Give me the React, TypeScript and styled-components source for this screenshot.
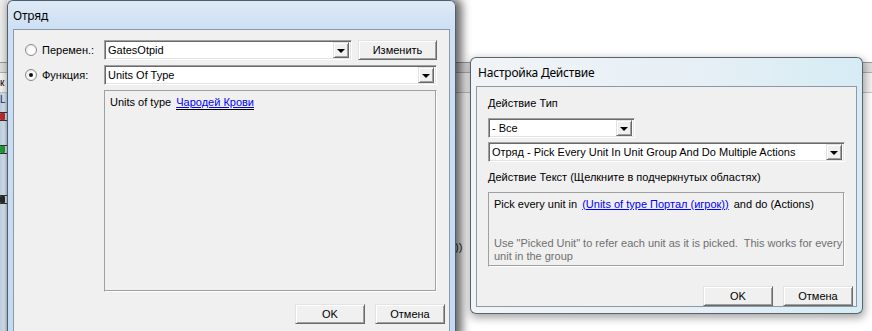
import React from "react";
import styled, { createGlobalStyle } from "styled-components";

const GlobalStyle = createGlobalStyle`
  html, body {
    margin: 0;
    padding: 0;
    background: #fff;
  }
  body {
    font-family: "Liberation Sans", Arial, sans-serif;
    font-size: 11px;
    color: #000;
    overflow: hidden;
  }
`;

const Desktop = styled.div`
  position: relative;
  width: 872px;
  height: 331px;
  overflow: hidden;
  background: #fff;
`;

// the editor window that sits behind both dialogs
const BackWindow = styled.div`
  display: grid;
  grid-template-columns: 7px 1fr;
  grid-template-rows: 62px 11px 20px 1fr;
  height: 100%;
`;

const SideTop = styled.div`
  background: #ececec;
`;

const MainTop = styled.div`
  background: #fff;
`;

const Toolbar = styled.div`
  grid-column: 1 / 3;
  background: #dedede;
  border-top: 1px solid #9a9a9a;
  border-bottom: 1px solid #b0b0b0;
`;

const TabRow = styled.div`
  grid-column: 1 / 3;
  display: flex;
  align-items: center;
  background: #f2f2f2;
  border-bottom: 1px solid #c4c4c4;
  overflow: hidden;
`;

const SideGlyph = styled.span<{ $color?: string }>`
  font-size: 10px;
  line-height: 12px;
  color: ${(p) => p.$color || "#000"};
`;

const SidePane = styled.div`
  display: flex;
  flex-direction: column;
  align-items: flex-start;
  padding-top: 1px;
  overflow: hidden;
  background: linear-gradient(to right, #b9cde0, #dfe9f3 60%, #c6d6e6);
`;

const SideSlot = styled.div<{ $top: number }>`
  margin-top: ${(p) => p.$top}px;
  display: flex;
`;

const MainBody = styled.div`
  background: #fff;
  padding: 148px 0 0 448px;
  font-size: 11px;
  color: #222;
`;

const Dialog = styled.div<{
  $x: number;
  $y: number;
  $w: number;
  $h: number;
  $tint: string;
  $shadow: string;
}>`
  position: absolute;
  left: ${(p) => p.$x}px;
  top: ${(p) => p.$y}px;
  width: ${(p) => p.$w}px;
  height: ${(p) => p.$h}px;
  box-sizing: border-box;
  display: flex;
  flex-direction: column;
  padding: 0 5px 6px;
  border: 1px solid rgba(35, 45, 60, 0.72);
  border-radius: 6px;
  background: ${(p) => p.$tint};
  box-shadow: ${(p) => p.$shadow};
`;

const TitleBar = styled.div<{ $indent: number }>`
  height: 28px;
  display: flex;
  align-items: center;
  padding-left: ${(p) => p.$indent}px;
  font-family: "Noto Sans", "Open Sans", sans-serif;
  font-size: 12px;
  letter-spacing: -0.2px;
  color: #000;
`;

const Client = styled.div`
  flex: 1;
  display: flex;
  flex-direction: column;
  background: #f0f0f0;
  border: 1px solid #8e99a6;
`;

const ChoiceGrid = styled.div`
  display: grid;
  grid-template-columns: 79px 333px;
  grid-template-rows: 20px 20px 202px;
  row-gap: 5px;
  padding: 10px 0 0 11px;
`;

const ChoiceLabel = styled.label`
  display: flex;
  align-items: center;
  gap: 5px;
`;

const Radio = styled.span<{ $checked?: boolean }>`
  width: 12px;
  height: 12px;
  box-sizing: border-box;
  border-radius: 50%;
  border: 1px solid #8a8a8a;
  background: radial-gradient(circle at 60% 60%, #fff 30%, #e2e2e2 100%);
  display: flex;
  align-items: center;
  justify-content: center;

  &::after {
    content: "";
    width: 4px;
    height: 4px;
    border-radius: 50%;
    background: #111;
    display: ${(p) => (p.$checked ? "block" : "none")};
  }
`;

const ControlRow = styled.div`
  display: flex;
  align-items: flex-start;
  gap: 6px;
`;

const Combo = styled.div<{ $w: number }>`
  width: ${(p) => p.$w}px;
  height: 20px;
  box-sizing: border-box;
  display: flex;
  align-items: center;
  padding: 1px;
  background: #fff;
  border: 1px solid;
  border-color: #a0a0a0 #fff #fff #a0a0a0;
  box-shadow: inset 1px 1px 0 #696969, inset -1px -1px 0 #e3e3e3;
`;

const ComboText = styled.span`
  flex: 1;
  padding-left: 2px;
  white-space: nowrap;
  overflow: hidden;
`;

const DropButton = styled.span`
  width: 16px;
  height: 16px;
  box-sizing: border-box;
  margin: 0 1px 0 0;
  display: flex;
  align-items: center;
  justify-content: center;
  background: #f0f0f0;
  border: 1px solid;
  border-color: #e3e3e3 #696969 #696969 #e3e3e3;
  box-shadow: inset 1px 1px 0 #fff, inset -1px -1px 0 #a0a0a0;
`;

const Arrow = styled.span`
  width: 0;
  height: 0;
  border-left: 4px solid transparent;
  border-right: 4px solid transparent;
  border-top: 4px solid #000;
  margin-top: 1px;
`;

const PushButton = styled.button<{ $w: number }>`
  width: ${(p) => p.$w}px;
  height: 20px;
  box-sizing: border-box;
  padding: 0;
  font: inherit;
  color: #000;
  background: #f0f0f0;
  border: 1px solid;
  border-color: #e3e3e3 #696969 #696969 #e3e3e3;
  box-shadow: inset 1px 1px 0 #fff, inset -1px -1px 0 #a0a0a0;
`;

const TextPanel = styled.div<{ $w?: number; $h?: number }>`
  grid-column: 2;
  ${(p) => (p.$w ? `width: ${p.$w}px;` : "")}
  ${(p) => (p.$h ? `height: ${p.$h}px;` : "")}
  box-sizing: border-box;
  padding: 5px 5px;
  line-height: 13px;
  background: #f0f0f0;
  border: 1px solid;
  border-color: #a0a0a0 #fff #fff #a0a0a0;
  box-shadow: inset -1px -1px 0 #a0a0a0;
`;

const Link = styled.span<{ $focused?: boolean }>`
  color: #0000ff;
  text-decoration: underline;
  margin: 0 2px;
  ${(p) => (p.$focused ? "padding-bottom: 1px; border-bottom: 1px solid #000;" : "")}
`;

const Hint = styled.div`
  margin-top: 26px;
  color: #6f6f6f;
  white-space: pre;
`;

const ButtonRow = styled.div<{ $top: number; $right: number }>`
  display: flex;
  justify-content: flex-end;
  gap: 10px;
  margin-top: ${(p) => p.$top}px;
  padding-right: ${(p) => p.$right}px;
`;

const Form = styled.div`
  display: flex;
  flex-direction: column;
  align-items: flex-start;
  padding: 10px 0 0 11px;
`;

const FieldLabel = styled.div<{ $top?: number }>`
  line-height: 13px;
  margin-top: ${(p) => p.$top || 0}px;
`;

const Stack = styled.div<{ $top: number }>`
  display: flex;
  flex-direction: column;
  gap: 4px;
  margin-top: ${(p) => p.$top}px;
`;

function SideIcon({ color }: { color: string }) {
  return (
    <svg width="7" height="9" viewBox="0 0 7 9">
      <rect x="0" y="1" width="5" height="7" rx="1" fill={color} />
      <rect x="0" y="0" width="7" height="1" fill="#333" />
      <rect x="0" y="8" width="7" height="1" fill="#333" />
    </svg>
  );
}

export default function App() {
  return (
    <Desktop>
      <GlobalStyle />
      <BackWindow>
        <SideTop />
        <MainTop />
        <Toolbar />
        <TabRow>
          <SideGlyph>к</SideGlyph>
        </TabRow>
        <SidePane>
          <SideGlyph $color="#1b2f6a">L</SideGlyph>
          <SideSlot $top={6}>
            <SideIcon color="#c0282a" />
          </SideSlot>
          <SideSlot $top={24}>
            <SideIcon color="#1f9a35" />
          </SideSlot>
          <SideSlot $top={41}>
            <SideIcon color="#2a2a2a" />
          </SideSlot>
        </SidePane>
        <MainBody>))</MainBody>
      </BackWindow>

      <Dialog
        $x={7}
        $y={0}
        $w={449}
        $h={340}
        $tint="linear-gradient(to bottom, #dde9f6 0px, #cde0f4 28px, #c4daf1 100%)"
        $shadow="4px 0 10px 2px rgba(0,0,0,0.6)"
      >
        <TitleBar $indent={0}>Отряд</TitleBar>
        <Client>
          <ChoiceGrid>
            <ChoiceLabel>
              <Radio />
              Перемен.:
            </ChoiceLabel>
            <ControlRow>
              <Combo $w={248}>
                <ComboText>GatesOtpid</ComboText>
                <DropButton>
                  <Arrow />
                </DropButton>
              </Combo>
              <PushButton $w={79}>Изменить</PushButton>
            </ControlRow>
            <ChoiceLabel>
              <Radio $checked />
              Функция:
            </ChoiceLabel>
            <Combo $w={333}>
              <ComboText>Units Of Type</ComboText>
              <DropButton>
                <Arrow />
              </DropButton>
            </Combo>
            <TextPanel>
              Units of type <Link $focused>Чародей Крови</Link>
            </TextPanel>
          </ChoiceGrid>
          <ButtonRow $top={12} $right={4}>
            <PushButton $w={70}>OK</PushButton>
            <PushButton $w={70}>Отмена</PushButton>
          </ButtonRow>
        </Client>
      </Dialog>

      <Dialog
        $x={470}
        $y={57}
        $w={393}
        $h={257}
        $tint="linear-gradient(to right, #f1f4f7 0%, #e6eff5 60%, #d6ecf4 100%)"
        $shadow="1px 3px 9px 1px rgba(0,0,0,0.35)"
      >
        <TitleBar $indent={2}>Настройка Действие</TitleBar>
        <Client>
          <Form>
            <FieldLabel>Действие Тип</FieldLabel>
            <Stack $top={8}>
              <Combo $w={147}>
                <ComboText>- Все</ComboText>
                <DropButton>
                  <Arrow />
                </DropButton>
              </Combo>
              <Combo $w={357}>
                <ComboText>
                  Отряд - Pick Every Unit In Unit Group And Do Multiple Actions
                </ComboText>
                <DropButton>
                  <Arrow />
                </DropButton>
              </Combo>
            </Stack>
            <FieldLabel $top={9}>
              Действие Текст (Щелкните в подчеркнутых областях)
            </FieldLabel>
            <Stack $top={8}>
              <TextPanel $w={357} $h={75}>
                Pick every unit in <Link>(Units of type Портал (игрок))</Link> and do
                (Actions)
                <Hint>
                  {"Use \"Picked Unit\" to refer each unit as it is picked.  This works for every\nunit in the group"}
                </Hint>
              </TextPanel>
            </Stack>
          </Form>
          <ButtonRow $top={19} $right={3}>
            <PushButton $w={70}>OK</PushButton>
            <PushButton $w={70}>Отмена</PushButton>
          </ButtonRow>
        </Client>
      </Dialog>
    </Desktop>
  );
}
